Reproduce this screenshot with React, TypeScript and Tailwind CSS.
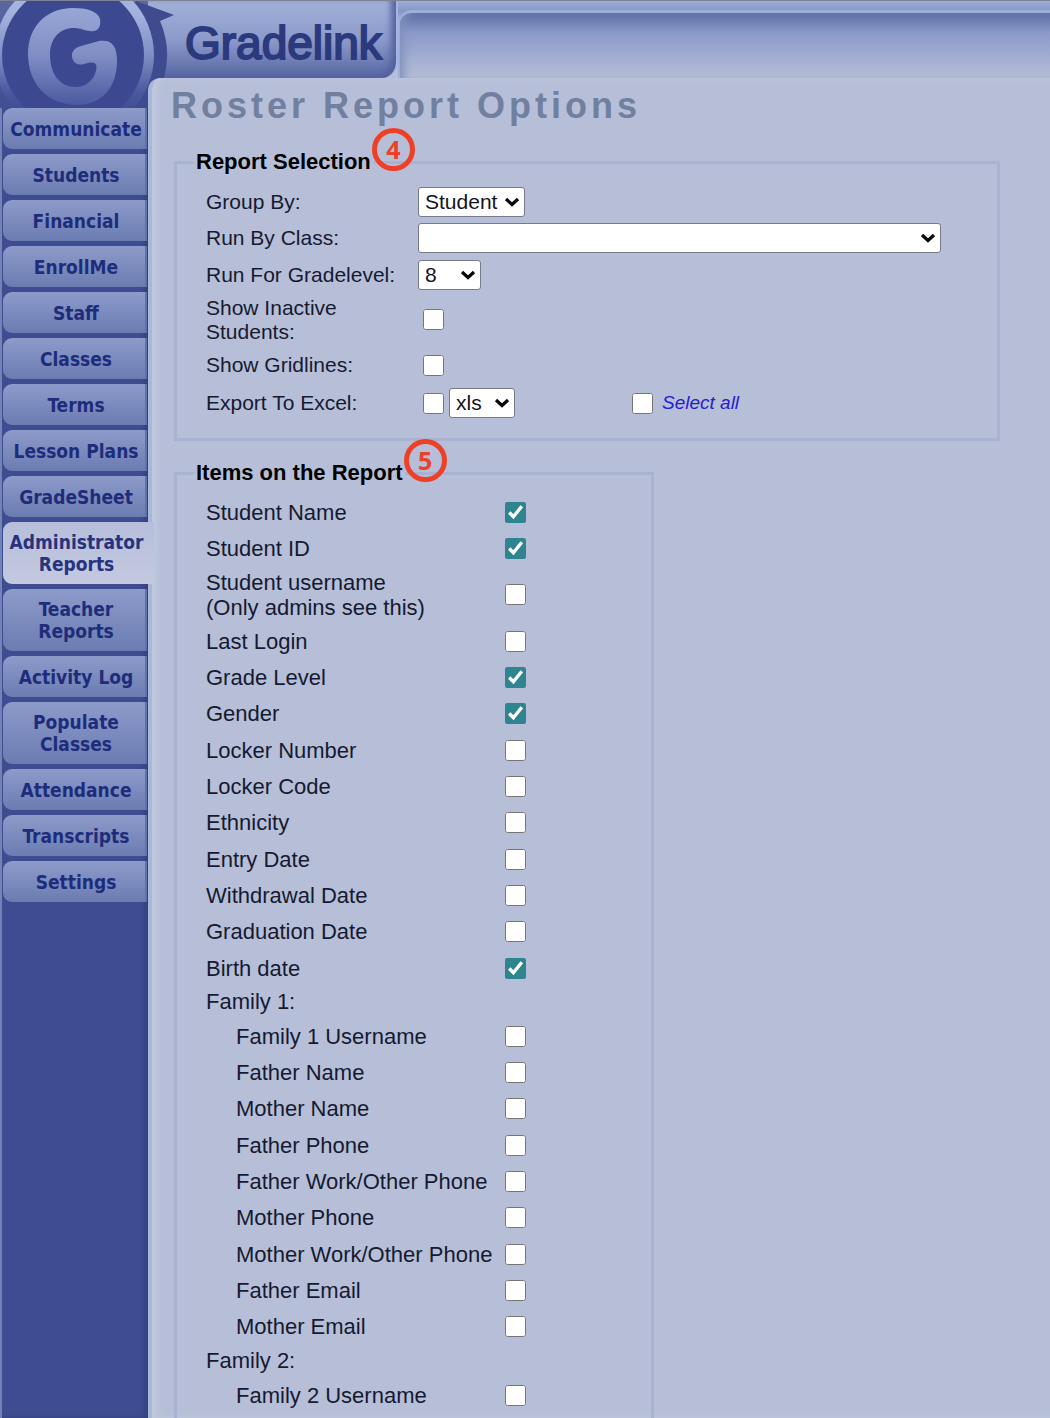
import type { ReactNode } from 'react';

const NAV = [
  'Communicate', 'Students', 'Financial', 'EnrollMe', 'Staff', 'Classes', 'Terms',
  'Lesson Plans', 'GradeSheet', 'Administrator Reports', 'Teacher Reports',
  'Activity Log', 'Populate Classes', 'Attendance', 'Transcripts', 'Settings',
];

type Item = { label: string; note?: string; checked?: boolean };

const GENERAL: Item[] = [
  { label: 'Last Login' },
  { label: 'Grade Level', checked: true },
  { label: 'Gender', checked: true },
  { label: 'Locker Number' },
  { label: 'Locker Code' },
  { label: 'Ethnicity' },
  { label: 'Entry Date' },
  { label: 'Withdrawal Date' },
  { label: 'Graduation Date' },
  { label: 'Birth date', checked: true },
];

const FAMILY_1: Item[] = [
  'Family 1 Username', 'Father Name', 'Mother Name', 'Father Phone',
  'Father Work/Other Phone', 'Mother Phone', 'Mother Work/Other Phone',
  'Father Email', 'Mother Email',
].map((label) => ({ label }));

const slug = (s: string) => s.toLowerCase().replace(/[^a-z0-9]+/g, '-');

function Logo() {
  return (
    <svg viewBox="0 0 180 107" className="pointer-events-none absolute left-0 top-0 z-10 h-[107px] w-[180px]" aria-hidden="true">
      <defs>
        <linearGradient id="ring" gradientUnits="userSpaceOnUse" x1="0" y1="0" x2="0" y2="108">
          <stop offset="0.1" stopColor="#a5b4de" />
          <stop offset="0.5" stopColor="#7f8ec6" />
          <stop offset="0.85" stopColor="#4a589d" />
          <stop offset="1" stopColor="#414e95" />
        </linearGradient>
        <linearGradient id="g" x1="0" y1="0" x2="0" y2="1">
          <stop offset="0" stopColor="#98a7d6" />
          <stop offset="0.5" stopColor="#7f8dc4" />
          <stop offset="1" stopColor="#4b599f" />
        </linearGradient>
        <linearGradient id="back" x1="0" y1="0" x2="0" y2="1">
          <stop offset="0" stopColor="#5a689f" />
          <stop offset="1" stopColor="#414e93" />
        </linearGradient>
      </defs>
      <path d="M0 0H148V108H0Z" fill="url(#back)" />
      <path d="M136 0L174 14L160 20Q172 48 164 77H158Q148 79 148 89V108H90Z" fill="#3e4b8f" />
      <circle cx="74" cy="54" r="80" fill="url(#ring)" />
      <circle cx="73" cy="54" r="71" fill="#3c4991" />
      <path d="M94 30C99 29 101 25 100 18C98 10 86 7 73 7C45 7 28 27 28 53C28 83 48 104 77 104C103 104 117 85 117 60C117 45 112 38 99 40L81 45C73 47 70 53 73 59C76 65 82 64 88 62C97 60 98 65 95 73C91 82 84 86 76 86C60 86 50 73 50 54C50 36 61 26 76 27C84 28 88 31 94 30Z" fill="url(#g)" />
    </svg>
  );
}

function Badge({ n }: { n: number }) {
  return (
    <span className="absolute -top-[22px] left-full -ml-[1px] flex size-[43px] items-center justify-center rounded-full border-5 border-[#ee4027] [font-family:'Open_Sans','Noto_Sans',sans-serif] text-[25px] leading-none font-bold text-[#ee4027]">
      {n}
    </span>
  );
}

function Panel({ title, badge, className, children }: { title: string; badge: number; className: string; children: ReactNode }) {
  return (
    <fieldset className={`min-w-0 border-[#a9b3d1] pl-[29px] ${className}`}>
      <legend className="relative -ml-3 px-[2px] text-[22px] leading-6 font-bold text-black">
        {title}
        <Badge n={badge} />
      </legend>
      {children}
    </fieldset>
  );
}

function Check({ id, checked }: { id: string; checked?: boolean }) {
  return (
    <input
      id={id}
      type="checkbox"
      defaultChecked={checked}
      className="m-0 size-[21px] shrink-0 accent-[#2f858f]"
    />
  );
}

function Select({ id, label, options, className }: { id: string; label?: string; options: string[]; className: string }) {
  return (
    <span className={`relative block ${className}`}>
      <select
        id={id}
        aria-label={label}
        className="block h-[30px] w-full appearance-none rounded-[3px] border border-[#777a88] bg-white pl-[6px] text-[21px] leading-6 text-[#14141c]"
      >
        {options.map((o) => (
          <option key={o}>{o}</option>
        ))}
      </select>
      <svg viewBox="0 0 16 10" className="pointer-events-none absolute right-[5px] top-[10px] h-[10px] w-4" aria-hidden="true">
        <path d="M2 2L8 7.5L14 2" fill="none" stroke="#08080c" strokeWidth="3.2" />
      </svg>
    </span>
  );
}

function OptionRow({ id, label, className = 'h-9', children }: { id: string; label: string; className?: string; children: ReactNode }) {
  return (
    <div className={`flex items-center ${className}`}>
      <div className="w-[212px] shrink-0">
        <label htmlFor={id} className="block w-[200px] text-[21px] leading-6">{label}</label>
      </div>
      {children}
    </div>
  );
}

function ItemRow({ item, indent }: { item: Item; indent?: boolean }) {
  const id = slug(item.label);
  return (
    <div className={`flex items-center ${item.note ? 'h-[57px]' : 'h-9 nth-[3n]:h-[37px]'}`}>
      <label htmlFor={id} className={`w-[299px] shrink-0 leading-[25px] whitespace-nowrap ${indent ? 'pl-[30px]' : ''}`}>
        {item.label}
        {item.note && <span className="block">{item.note}</span>}
      </label>
      <Check id={id} checked={item.checked} />
    </div>
  );
}

export default function App() {
  return (
    <div className="relative flex min-h-screen border-t border-[#7d8296] bg-[#3f4c91] font-['Liberation_Sans',Arial,sans-serif] text-[22px] text-[#151a31]">
      <Logo />
      <aside className="w-[148px] shrink-0 border-l-2 border-[#7483b5] pt-[107px] shadow-[inset_-4px_0_4px_#35427f]">
        <nav className="flex flex-col gap-[5px] pl-px" aria-label="Main">
          {NAV.map((name) => {
            const active = name === 'Administrator Reports';
            return (
              <a
                key={name}
                href={`#${slug(name)}`}
                aria-current={active ? 'page' : undefined}
                className={`flex min-h-[41px] items-center justify-center rounded-l-[9px] py-[9px] text-center [font-family:'DejaVu_Sans_Condensed','DejaVu_Sans',sans-serif] text-[19px] leading-[22px] font-bold ${
                  active
                    ? 'relative z-10 -mr-[6px] bg-linear-to-b from-[#b7bedb] to-[#c3c9df] pr-[4px] text-[#27337e]'
                    : 'mr-px border-r-2 border-[#6170aa] bg-linear-to-b from-[#8d9bca] to-[#6b7cb1] pl-1 text-[#1d2d7b]'
                }`}
              >
                <span className={name.includes('Reports') || name === 'Populate Classes' ? 'w-min' : 'whitespace-nowrap'}>{name}</span>
              </a>
            );
          })}
        </nav>
      </aside>

      <div className="flex min-w-0 flex-1 flex-col">
        <header className="flex h-[77px] bg-[#b6bfd7]">
          <div className="w-[250px] shrink-0 rounded-br-[16px] border-r-2 border-[#a5b5df] bg-linear-to-b from-[#a2b1d8] via-[#8c9acb] to-[#5866a4] pl-[37px] shadow-[inset_-5px_-3px_6px_#53629f]">
            <span className="block pt-[15px] text-[46px] leading-[54px] text-[#2b3a7c] [-webkit-text-stroke:2px_#2b3a7c]">Gradelink</span>
          </div>
          <div className="flex-1 bg-linear-to-b from-[#9daed4] from-0% via-[#8796c6] via-[10px] to-[#b6bfd7] to-[24px]">
            <div className="mt-[9px] h-[68px] rounded-tl-[14px] border-t-3 border-l-2 border-[#9eaedb] bg-linear-to-b from-[#5b6da3] via-[#8b99ca] via-30% to-[#b6bfd7] shadow-[inset_8px_0_10px_-4px_#8090bb]" />
          </div>
        </header>

        <main className="flex flex-1 flex-col rounded-tl-[12px] border-l-4 border-[#aab8d8] bg-[#b6bfd7] pr-[50px] pl-[22px] shadow-[inset_5px_0_6px_#bfc9df]">
          <h1 className="-ml-[3px] pt-[7px] text-[36px] leading-[42px] font-bold tracking-[4px] text-[#71809f]">Roster Report Options</h1>

          <Panel title="Report Selection" badge={4} className="mt-[23px] h-[291px] border-3">
            <div className="pt-[10px]">
              <OptionRow id="group-by" label="Group By:">
                <Select id="group-by" options={['Student', 'Family']} className="w-[107px]" />
              </OptionRow>
              <OptionRow id="run-class" label="Run By Class:">
                <Select id="run-class" options={['']} className="mr-[56px] max-w-[524px] flex-1" />
              </OptionRow>
              <OptionRow id="run-grade" label="Run For Gradelevel:" className="h-[37px]">
                <Select id="run-grade" options={['8', '7', '6']} className="w-[63px]" />
              </OptionRow>
              <OptionRow id="inactive" label="Show Inactive Students:" className="h-[53px]">
                <span className="flex pl-[5px]"><Check id="inactive" /></span>
              </OptionRow>
              <OptionRow id="gridlines" label="Show Gridlines:" className="h-[38px]">
                <span className="flex pl-[5px]"><Check id="gridlines" /></span>
              </OptionRow>
              <OptionRow id="excel" label="Export To Excel:" className="h-[38px]">
                <span className="flex w-[214px] items-center gap-[5px] pl-[5px]">
                  <Check id="excel" />
                  <Select id="format" label="Export format" options={['xls', 'csv']} className="w-[66px]" />
                </span>
                <Check id="all" />
                <label htmlFor="all" className="pl-[9px] text-[19px] text-[#2520cf] italic">Select all</label>
              </OptionRow>
            </div>
          </Panel>

          <Panel title="Items on the Report" badge={5} className="mt-[20px] w-[480px] max-w-full flex-1 border-x-3 border-t-3">
            <div className="pt-[9px]">
              <ItemRow item={{ label: 'Student Name', checked: true }} />
              <ItemRow item={{ label: 'Student ID', checked: true }} />
              <ItemRow item={{ label: 'Student username', note: '(Only admins see this)' }} />
            </div>
            <div>{GENERAL.map((i) => <ItemRow key={i.label} item={i} />)}</div>
            <div className="h-8 leading-8">Family 1:</div>
            <div>{FAMILY_1.map((i) => <ItemRow key={i.label} item={i} indent />)}</div>
            <div className="h-8 leading-8">Family 2:</div>
            <div><ItemRow item={{ label: 'Family 2 Username' }} indent /></div>
          </Panel>
        </main>
      </div>
    </div>
  );
}
